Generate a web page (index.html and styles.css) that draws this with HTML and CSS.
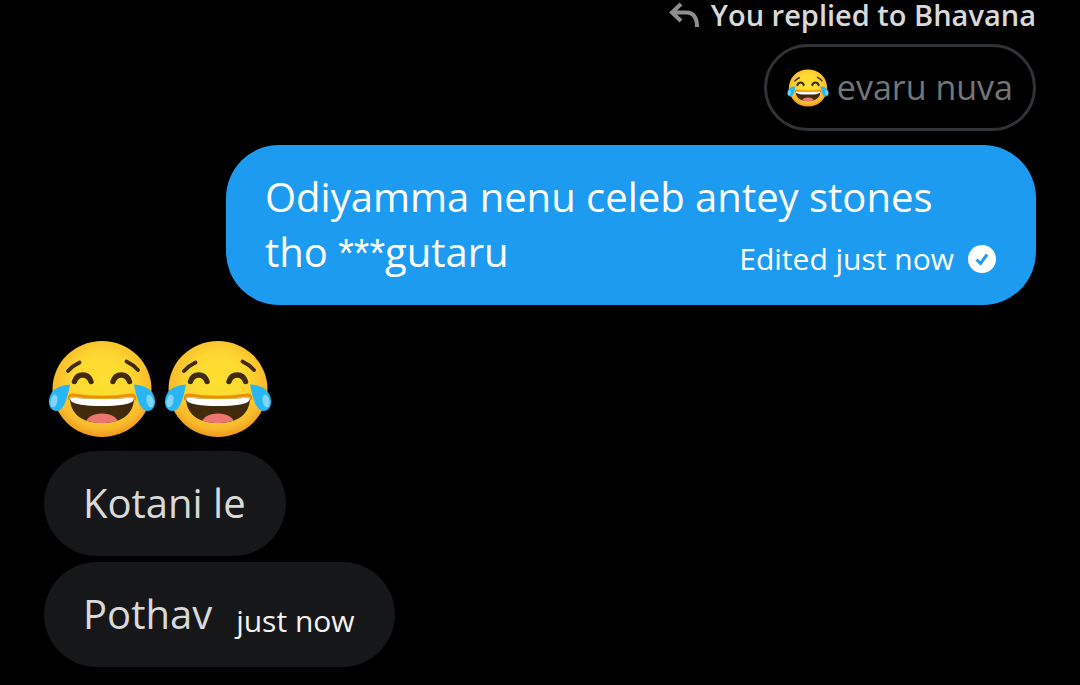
FILE: index.html
```
<!DOCTYPE html>
<html lang="en">
<head>
	<meta charset="UTF-8">
	<meta name="viewport" content="width=device-width, initial-scale=1">
	<title>Messages</title>
	<link rel="stylesheet" href="styles.css">
</head>
<body>
<svg class="defs" aria-hidden="true">
	<defs>
		<radialGradient id="skin" cx=".5" cy=".42" r=".58">
			<stop offset="0" stop-color="#FDE030"/>
			<stop offset=".5" stop-color="#FDD92F"/>
			<stop offset=".85" stop-color="#F9B92C"/>
			<stop offset="1" stop-color="#F0981F"/>
		</radialGradient>
		<clipPath id="mouth">
			<path d="M22 57.500Q54 60.500 86 57.500C86 74 74 83 54 83S22 74 22 57.500Z"/>
		</clipPath>
	</defs>
	<symbol id="joy" viewBox="0 0 108 98">
		<ellipse cx="54" cy="49" rx="49.500" ry="48" fill="url(#skin)"/>
		<g fill="none" stroke="#422B0D" stroke-linecap="round">
			<path d="M20 31Q25 25.500 31.500 22.500M78.500 21.500Q85 24.500 90 30" stroke-width="3.800"/>
			<path d="M26.500 41.500C28 37 31 35 34.700 35S41.500 37 43 41.500M65 41.500C66.500 37 69.500 35 73.300 35S80 37 81.500 41.500" stroke-width="5.400"/>
		</g>
		<path d="M22 60Q20 54.500 25 55Q54 59.500 83 55Q88 54.500 86 60" fill="none" stroke="#EB8F00" stroke-width="3"/>
		<g clip-path="url(#mouth)">
			<path d="M18 54H90V86H18Z" fill="#422B0D"/>
			<ellipse cx="54" cy="83" rx="16" ry="9.500" fill="#ED7770"/>
			<path d="M20 54H88L85 61Q80 66 54 66T23 61Z" fill="#FFF"/>
		</g>
		<path d="M22 44.500Q10 45 4 52Q-1 60 2 67Q6 73 12 70Q18 66 22 44.500Z" fill="#29B6F6"/>
		<path d="M86 44.500Q98 45 104 52Q109 60 106 67Q102 73 96 70Q90 66 86 44.500Z" fill="#29B6F6"/>
		<g fill="#81D4FA">
			<ellipse cx="6" cy="61" rx="3.400" ry="6.500" transform="rotate(12 6 61)"/>
			<ellipse cx="102" cy="61" rx="3.400" ry="6.500" transform="rotate(-12 102 61)"/>
		</g>
	</symbol>
</svg>

<main class="chat">
	<div class="row sent">
		<div class="reply-label">
			<svg class="reply-icon" viewBox="0 0 32 28" aria-hidden="true">
				<path d="M12 3L3 11.500L12 20M4 11.500H17Q28 11.500 28 26"/>
			</svg>
			<span>You replied to Bhavana</span>
		</div>
		<div class="quote">
			<svg class="emoji-small" role="img" aria-label="face with tears of joy"><use href="#joy"/></svg>
			<span>evaru nuva</span>
		</div>
		<div class="bubble bubble-sent">
			Odiyamma nenu celeb antey stones tho <span class="stars">***</span>gutaru
			<span class="meta">
				Edited just now
				<svg class="check" viewBox="0 0 28 28" aria-hidden="true">
					<circle cx="14" cy="14" r="14"/>
					<path d="M8.500 14.500L12.500 18.500L19 9.500"/>
				</svg>
			</span>
		</div>
	</div>

	<div class="row received">
		<div class="emojis">
			<svg class="emoji" role="img" aria-label="face with tears of joy"><use href="#joy"/></svg>
			<svg class="emoji" role="img" aria-label="face with tears of joy"><use href="#joy"/></svg>
		</div>
		<div class="bubble">Kotani le</div>
		<div class="bubble">Pothav <span class="meta">just now</span></div>
	</div>
</main>
</body>
</html>
```
FILE: styles.css
```
* {
	box-sizing: border-box;
}
body {
	margin: 0;
	background-color: #000;
	color: #D9D9D9;
	font-family: "Open Sans", "Noto Sans", sans-serif;
}
.defs {
	position: absolute;
	width: 0;
	height: 0;
}
.chat {
	padding: 0 44px 18px;
}
.row {
	display: flex;
	flex-direction: column;
}
.sent {
	align-items: flex-end;
}
.received {
	align-items: flex-start;
	gap: 6px;
	padding-top: 35px;
}

/* quoted message */
.reply-label {
	display: flex;
	align-items: center;
	gap: 10px;
	font-size: 29px;
	font-weight: 600;
	line-height: 30px;
}
.reply-icon {
	width: 32px;
	height: 28px;
	fill: none;
	stroke: #8E8E8E;
	stroke-width: 4;
}
.quote {
	display: flex;
	align-items: center;
	gap: 8px;
	margin: 14px 0;
	padding: 15px 20px;
	border: 3px solid #2F3336;
	border-radius: 44px;
	color: #71767B;
	font-size: 34px;
	line-height: 51px;
}
.emoji-small {
	width: 42px;
	height: 38px;
}

/* bubbles */
.bubble {
	display: flex;
	align-items: flex-end;
	gap: 24px;
	padding: 24px 40px 26px 39px;
	border-radius: 53px;
	background-color: #161718;
	font-size: 40px;
	line-height: 55px;
}
.bubble-sent {
	display: block;
	width: 75vw;
	background-color: #1D9BF0;
	color: #FFF;
}
.stars {
	font-family: "Liberation Sans", sans-serif;
	line-height: 1;
}
.meta {
	color: #F2F2F2;
	font-size: 30px;
	line-height: 40px;
}
.bubble-sent .meta {
	display: flex;
	float: right;
	align-items: center;
	gap: 14px;
	margin-top: 15px;
	color: #FFF;
}
.check {
	width: 28px;
	height: 28px;
	fill: #FFF;
}
.check path {
	fill: none;
	stroke: #1D9BF0;
	stroke-width: 3;
}

.emojis {
	display: flex;
	gap: 8px;
	padding: 0 4px;
	margin-bottom: 7px;
}
.emoji {
	width: 108px;
	height: 98px;
}
```
